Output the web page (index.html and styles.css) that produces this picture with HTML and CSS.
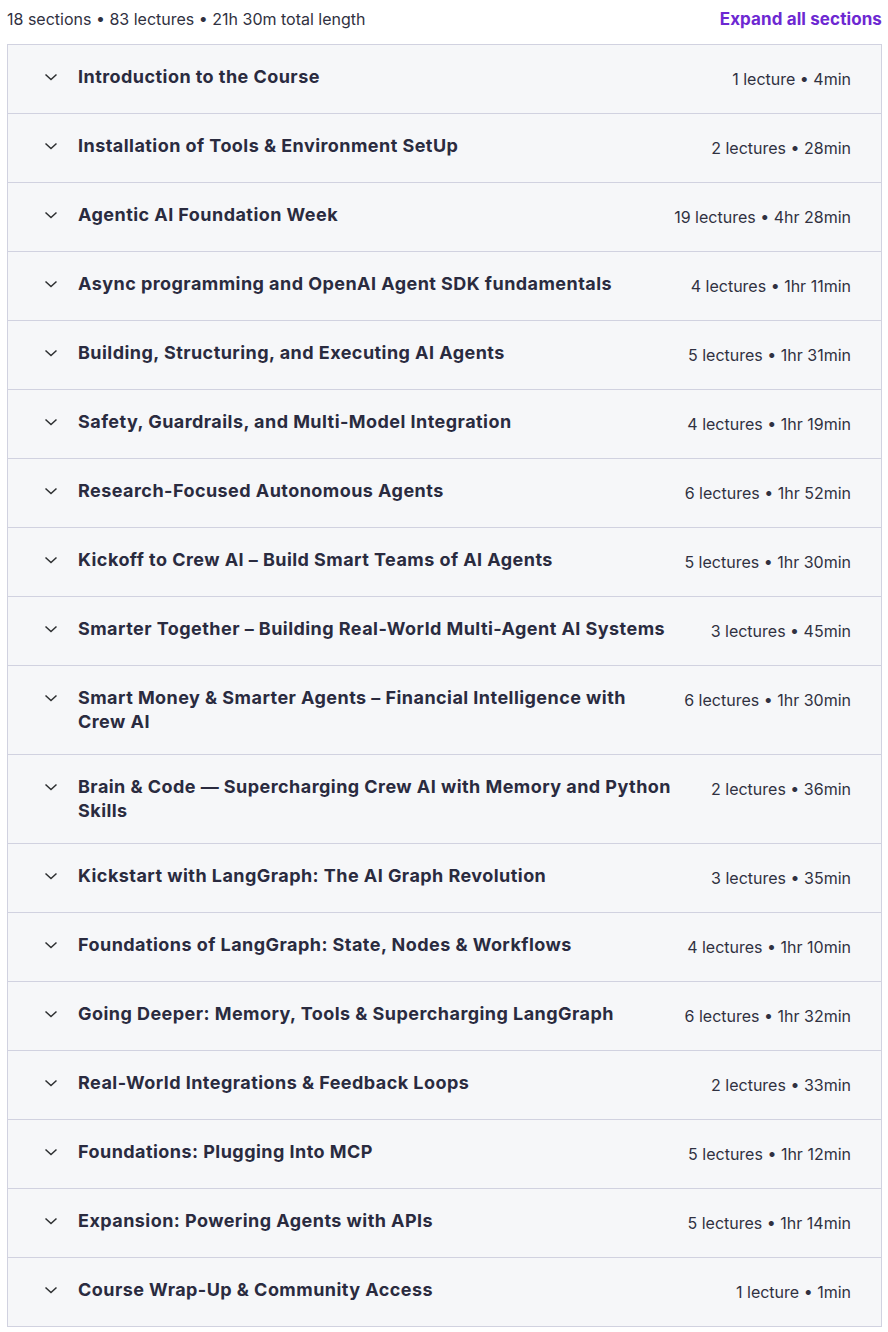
FILE: index.html
```html
<!DOCTYPE html>
<html lang="en">
<head>
<meta charset="utf-8">
<title>Course content</title>
<link rel="stylesheet" href="styles.css">
</head>
<body>
<div class="curriculum">
  <div class="summary">
    <span class="summary-text">18 sections • 83 lectures • 21h 30m total length</span>
    <button class="expand" type="button">Expand all sections</button>
  </div>
  <div class="sections">
    <div class="section"><span class="chev"><svg viewBox="0 0 16 16" width="16" height="16"><path d="M2.5 5.5 8 10.5 13.5 5.5"/></svg></span><h3 class="title">Introduction to the Course</h3><span class="meta">1 lecture • 4min</span></div>
    <div class="section"><span class="chev"><svg viewBox="0 0 16 16" width="16" height="16"><path d="M2.5 5.5 8 10.5 13.5 5.5"/></svg></span><h3 class="title">Installation of Tools &amp; Environment SetUp</h3><span class="meta">2 lectures • 28min</span></div>
    <div class="section"><span class="chev"><svg viewBox="0 0 16 16" width="16" height="16"><path d="M2.5 5.5 8 10.5 13.5 5.5"/></svg></span><h3 class="title">Agentic AI Foundation Week</h3><span class="meta">19 lectures • 4hr 28min</span></div>
    <div class="section"><span class="chev"><svg viewBox="0 0 16 16" width="16" height="16"><path d="M2.5 5.5 8 10.5 13.5 5.5"/></svg></span><h3 class="title">Async programming and OpenAI Agent SDK fundamentals</h3><span class="meta">4 lectures • 1hr 11min</span></div>
    <div class="section"><span class="chev"><svg viewBox="0 0 16 16" width="16" height="16"><path d="M2.5 5.5 8 10.5 13.5 5.5"/></svg></span><h3 class="title">Building, Structuring, and Executing AI Agents</h3><span class="meta">5 lectures • 1hr 31min</span></div>
    <div class="section"><span class="chev"><svg viewBox="0 0 16 16" width="16" height="16"><path d="M2.5 5.5 8 10.5 13.5 5.5"/></svg></span><h3 class="title">Safety, Guardrails, and Multi-Model Integration</h3><span class="meta">4 lectures • 1hr 19min</span></div>
    <div class="section"><span class="chev"><svg viewBox="0 0 16 16" width="16" height="16"><path d="M2.5 5.5 8 10.5 13.5 5.5"/></svg></span><h3 class="title">Research-Focused Autonomous Agents</h3><span class="meta">6 lectures • 1hr 52min</span></div>
    <div class="section"><span class="chev"><svg viewBox="0 0 16 16" width="16" height="16"><path d="M2.5 5.5 8 10.5 13.5 5.5"/></svg></span><h3 class="title">Kickoff to Crew AI – Build Smart Teams of AI Agents</h3><span class="meta">5 lectures • 1hr 30min</span></div>
    <div class="section"><span class="chev"><svg viewBox="0 0 16 16" width="16" height="16"><path d="M2.5 5.5 8 10.5 13.5 5.5"/></svg></span><h3 class="title">Smarter Together – Building Real-World Multi-Agent AI Systems</h3><span class="meta">3 lectures • 45min</span></div>
    <div class="section"><span class="chev"><svg viewBox="0 0 16 16" width="16" height="16"><path d="M2.5 5.5 8 10.5 13.5 5.5"/></svg></span><h3 class="title">Smart Money &amp; Smarter Agents – Financial Intelligence with Crew AI</h3><span class="meta">6 lectures • 1hr 30min</span></div>
    <div class="section"><span class="chev"><svg viewBox="0 0 16 16" width="16" height="16"><path d="M2.5 5.5 8 10.5 13.5 5.5"/></svg></span><h3 class="title">Brain &amp; Code — Supercharging Crew AI with Memory and Python Skills</h3><span class="meta">2 lectures • 36min</span></div>
    <div class="section"><span class="chev"><svg viewBox="0 0 16 16" width="16" height="16"><path d="M2.5 5.5 8 10.5 13.5 5.5"/></svg></span><h3 class="title">Kickstart with LangGraph: The AI Graph Revolution</h3><span class="meta">3 lectures • 35min</span></div>
    <div class="section"><span class="chev"><svg viewBox="0 0 16 16" width="16" height="16"><path d="M2.5 5.5 8 10.5 13.5 5.5"/></svg></span><h3 class="title">Foundations of LangGraph: State, Nodes &amp; Workflows</h3><span class="meta">4 lectures • 1hr 10min</span></div>
    <div class="section"><span class="chev"><svg viewBox="0 0 16 16" width="16" height="16"><path d="M2.5 5.5 8 10.5 13.5 5.5"/></svg></span><h3 class="title">Going Deeper: Memory, Tools &amp; Supercharging LangGraph</h3><span class="meta">6 lectures • 1hr 32min</span></div>
    <div class="section"><span class="chev"><svg viewBox="0 0 16 16" width="16" height="16"><path d="M2.5 5.5 8 10.5 13.5 5.5"/></svg></span><h3 class="title">Real-World Integrations &amp; Feedback Loops</h3><span class="meta">2 lectures • 33min</span></div>
    <div class="section"><span class="chev"><svg viewBox="0 0 16 16" width="16" height="16"><path d="M2.5 5.5 8 10.5 13.5 5.5"/></svg></span><h3 class="title">Foundations: Plugging Into MCP</h3><span class="meta">5 lectures • 1hr 12min</span></div>
    <div class="section"><span class="chev"><svg viewBox="0 0 16 16" width="16" height="16"><path d="M2.5 5.5 8 10.5 13.5 5.5"/></svg></span><h3 class="title">Expansion: Powering Agents with APIs</h3><span class="meta">5 lectures • 1hr 14min</span></div>
    <div class="section"><span class="chev"><svg viewBox="0 0 16 16" width="16" height="16"><path d="M2.5 5.5 8 10.5 13.5 5.5"/></svg></span><h3 class="title">Course Wrap-Up &amp; Community Access</h3><span class="meta">1 lecture • 1min</span></div>
  </div>
</div>
</body>
</html>
```
FILE: styles.css
```css
* { box-sizing: border-box; }

body {
  margin: 0;
  background: #ffffff;
  font-family: Inter, "Noto Sans", "DejaVu Sans", sans-serif;
  color: #303141;
}

.curriculum {
  width: 875px;
  margin-left: 7px;
}

.summary {
  height: 38px;
  margin-bottom: 6px;
  display: flex;
  align-items: center;
  justify-content: space-between;
}

.summary-text {
  font-size: 16px;
  letter-spacing: 0;
  color: #303141;
}

.expand {
  border: 0;
  padding: 0;
  margin: 0;
  background: none;
  font-family: inherit;
  font-size: 17px;
  font-weight: 700;
  letter-spacing: 0.1px;
  color: #6d28d2;
  cursor: pointer;
}

.sections {
  border: 1px solid #d1d2e0;
  border-bottom: 0;
}

.section {
  display: flex;
  align-items: flex-start;
  padding: 20px 30px 20px 35px;
  background: #f6f7f9;
  border-bottom: 1px solid #d1d2e0;
}

.chev {
  flex: none;
  width: 16px;
  height: 24px;
  display: flex;
  align-items: center;
}

.chev svg {
  fill: none;
  stroke: #2d2f31;
  stroke-width: 1.5;
}

.title {
  flex: 1;
  margin: 0 0 0 19px;
  font-size: 18px;
  font-weight: 700;
  line-height: 24px;
  letter-spacing: 0.45px;
  color: #2a2b3f;
}

.meta {
  flex: none;
  margin-left: 24px;
  font-size: 16px;
  line-height: 28px;
  letter-spacing: 0;
  white-space: nowrap;
  color: #303141;
}
```
